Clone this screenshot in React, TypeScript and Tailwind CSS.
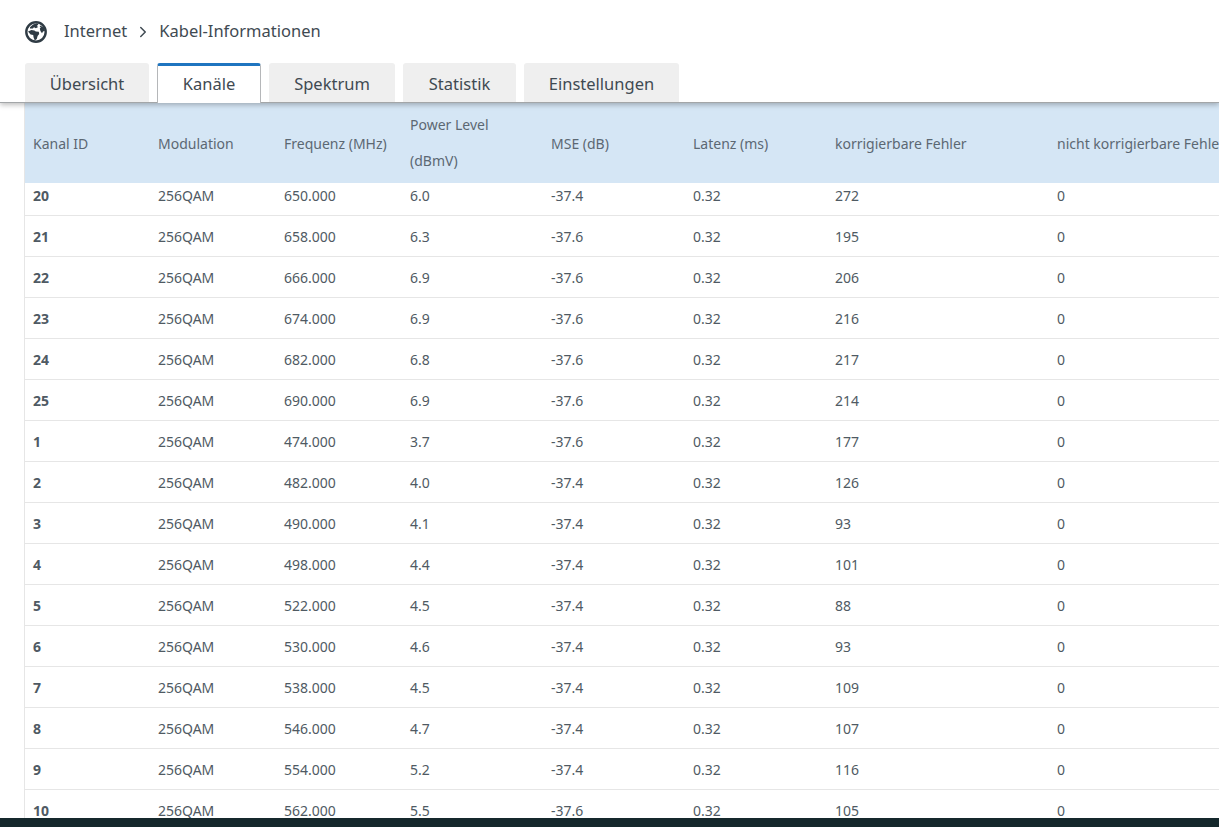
import React from "react";
import { ChevronRight } from "lucide-react";

const rows: [string, string, string, string, string, string][] = [
  ["20", "650.000", "6.0", "-37.4", "272", "0"],
  ["21", "658.000", "6.3", "-37.6", "195", "0"],
  ["22", "666.000", "6.9", "-37.6", "206", "0"],
  ["23", "674.000", "6.9", "-37.6", "216", "0"],
  ["24", "682.000", "6.8", "-37.6", "217", "0"],
  ["25", "690.000", "6.9", "-37.6", "214", "0"],
  ["1", "474.000", "3.7", "-37.6", "177", "0"],
  ["2", "482.000", "4.0", "-37.4", "126", "0"],
  ["3", "490.000", "4.1", "-37.4", "93", "0"],
  ["4", "498.000", "4.4", "-37.4", "101", "0"],
  ["5", "522.000", "4.5", "-37.4", "88", "0"],
  ["6", "530.000", "4.6", "-37.4", "93", "0"],
  ["7", "538.000", "4.5", "-37.4", "109", "0"],
  ["8", "546.000", "4.7", "-37.4", "107", "0"],
  ["9", "554.000", "5.2", "-37.4", "116", "0"],
  ["10", "562.000", "5.5", "-37.6", "105", "0"],
];

const tabs = [
  { label: "Übersicht", w: "w-[124px]", active: false },
  { label: "Kanäle", w: "w-[104px]", active: true },
  { label: "Spektrum", w: "w-[126px]", active: false },
  { label: "Statistik", w: "w-[113px]", active: false },
  { label: "Einstellungen", w: "w-[155px]", active: false },
];

const cols = "grid grid-cols-[125px_126px_126px_141px_142px_142px_222px_300px] w-[1424px]";

function Globe() {
  return (
    <svg viewBox="0 0 22 22" className="mr-[17px] h-[22px] w-[22px] shrink-0 text-[#2f3b44]" fill="currentColor">
      <circle cx="11" cy="11" r="9.7" fill="none" stroke="currentColor" strokeWidth="2.4" />
      <path d="M5 6.2 8 3.6l4-1.4 1.4 1.2-1.6 1.6 1.4 1-2.4 1.2-1.8-1-1.2 1.2-2.8.2Z" />
      <path d="M3 10.4l3.4-1.4 3 .4 1.4 1.2 3 .2.4 2.2-1.6 2-.8 3-2 1.6-1.2-3-.4-2.6-2.6-.6L3 10.4Z" />
      <path d="M15 4.4l4 2.2 1 3.2-2 .6-1 1.8-1.6-2.2-.6-2.4 1-1-1-1.2.2-1Z" />
    </svg>
  );
}

export default function App() {
  return (
    <div className="flex h-[827px] w-[1219px] flex-col overflow-hidden bg-white font-['Noto_Sans',sans-serif] text-[#4f5a63]">
      <header className="relative z-10 h-[103px] shrink-0 border-b border-[#a3a6a8] shadow-[0_2px_5px_rgba(0,0,0,0.25)]">
        <div className="flex h-[63px] items-center pl-[25px] text-[16.5px] text-[#3f4a52]">
          <Globe />
          <span>Internet</span>
          <ChevronRight className="ml-[7px] mr-[7px] h-[18px] w-[18px] text-[#3f4a52]" strokeWidth={2} />
          <span>Kabel-Informationen</span>
        </div>
        <nav className="flex h-[39px] gap-[8px] pl-[25px] text-[16.5px] text-[#3f4a52]">
          {tabs.map((t) =>
            t.active ? (
              <div
                key={t.label}
                className={`${t.w} relative z-10 flex h-[40px] items-center justify-center rounded-t-[3px] border-x border-[#b5b7b9] border-t-[3px] border-t-[#1f75c0] bg-white`}
              >
                {t.label}
              </div>
            ) : (
              <div key={t.label} className={`${t.w} flex items-center justify-center rounded-t-[3px] bg-[#efefef] pt-[3px]`}>
                {t.label}
              </div>
            )
          )}
        </nav>
      </header>

      <main className="min-h-0 flex-1 overflow-hidden pl-[24px]">
        <div className="border-l border-[#e6e6e6] text-[14px]">
          <div className={`${cols} h-[80px] items-center bg-[#d5e6f5] text-[#5c6873]`}>
            <div className="pl-[8px]">Kanal ID</div>
            <div className="pl-[8px]">Modulation</div>
            <div className="pl-[8px]">Frequenz (MHz)</div>
            <div className="pl-[8px] leading-[36px]">
              Power Level
              <br />
              (dBmV)
            </div>
            <div className="pl-[8px]">MSE (dB)</div>
            <div className="pl-[8px]">Latenz (ms)</div>
            <div className="pl-[8px]">korrigierbare Fehler</div>
            <div className="whitespace-nowrap pl-[8px]">nicht korrigierbare Fehler</div>
          </div>
          {rows.map((r, i) => (
            <div
              key={r[0]}
              className={`${cols} items-center border-b border-[#e6e6e6] ${i === 0 ? "h-[33px] pb-[7px]" : "h-[41px] pt-[1px]"}`}
            >
              <div className="pl-[8px] font-bold">{r[0]}</div>
              <div className="pl-[8px]">256QAM</div>
              <div className="pl-[8px]">{r[1]}</div>
              <div className="pl-[8px]">{r[2]}</div>
              <div className="pl-[8px]">{r[3]}</div>
              <div className="pl-[8px]">0.32</div>
              <div className="pl-[8px]">{r[4]}</div>
              <div className="pl-[8px]">{r[5]}</div>
            </div>
          ))}
        </div>
      </main>

      <footer className="h-[9px] shrink-0 bg-[#15282c]" />
    </div>
  );
}
